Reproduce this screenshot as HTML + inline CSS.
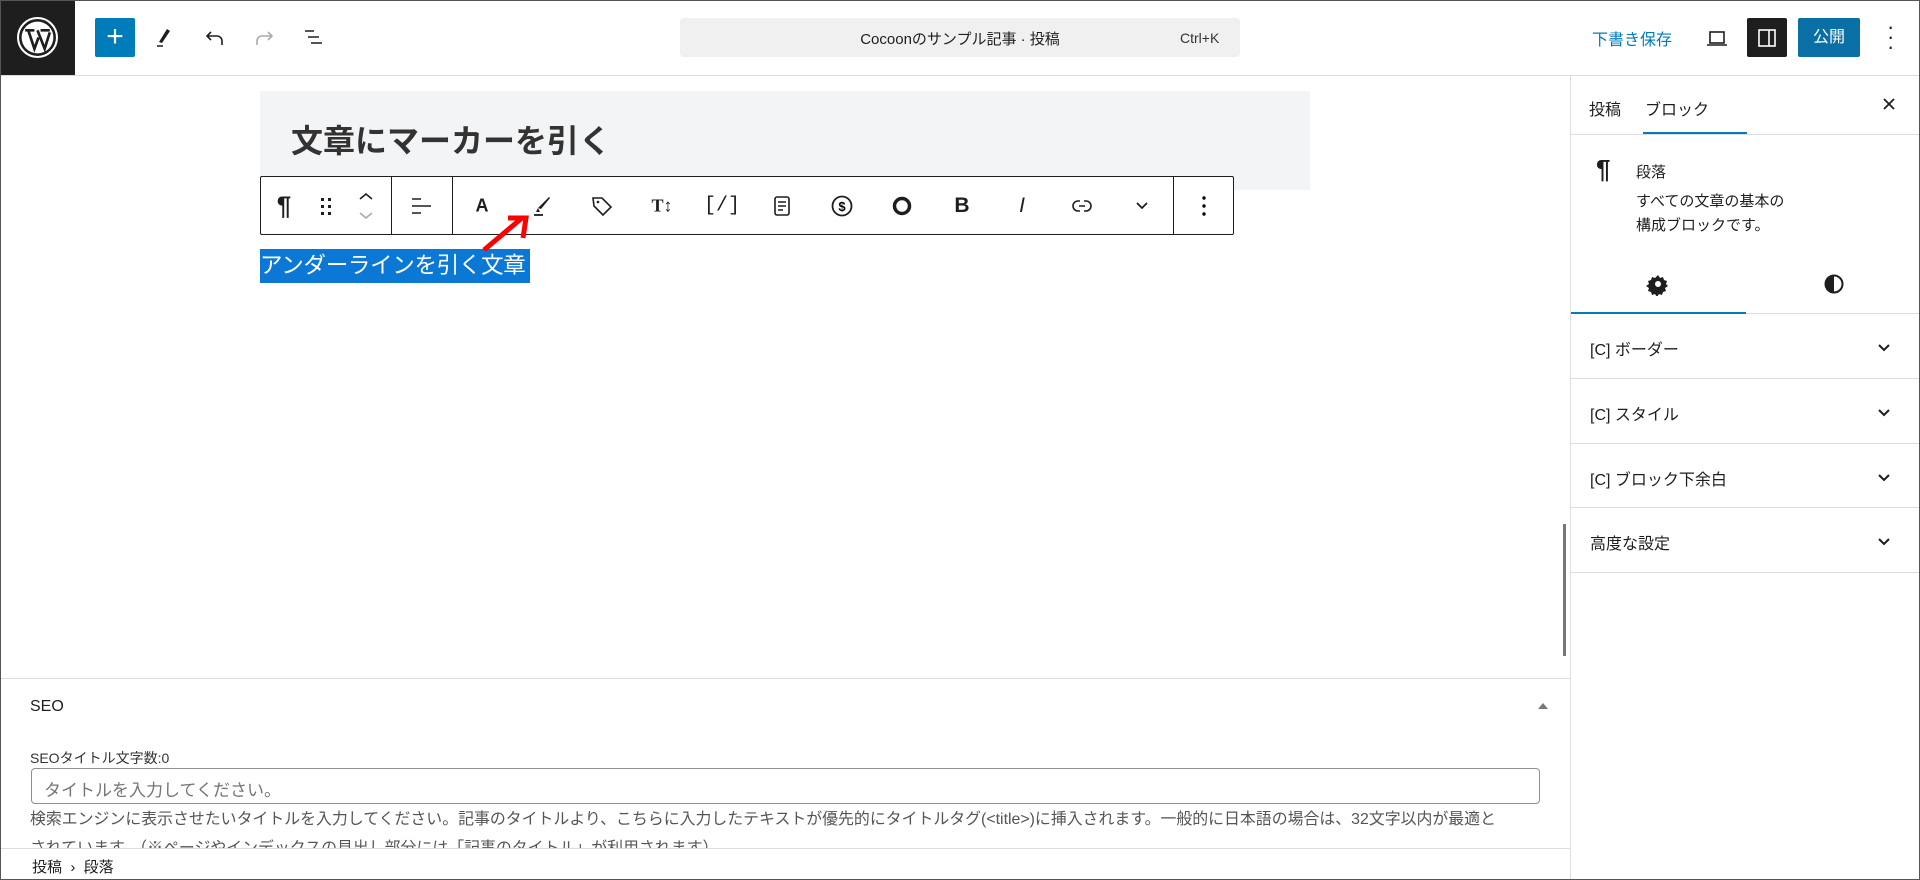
<!DOCTYPE html>
<html><head><meta charset="utf-8"><style>
*{box-sizing:border-box;margin:0;padding:0}
body{width:1920px;height:880px;overflow:hidden;background:#fff;font-family:"Liberation Sans","Noto Sans CJK JP",sans-serif;color:#1e1e1e;position:relative}
.a{position:absolute}
.ic{position:absolute;transform:translate(-50%,-50%)}
.lbl{font-size:16px;color:#1e1e1e}
.hl{left:1571px;width:348px;height:1px;background:#ddd}
</style></head><body>
<div class="a" style="left:0;top:0;width:1920px;height:880px;border:1.5px solid #555;z-index:10;pointer-events:none"></div>
<div class="a" style="left:0;top:0;width:75px;height:75px;background:#1e1e1e"></div>
<svg class="a" style="left:17px;top:17px" width="41" height="41" viewBox="0 0 40 40"><circle cx="20" cy="20" r="19" fill="none" stroke="#fff" stroke-width="2"/><circle cx="20" cy="20" r="15.5" fill="#fff"/><path d="M8 13h9M23 13h9M11 13l6 18 4-11M20 13l7 18 5-16" fill="none" stroke="#1e1e1e" stroke-width="2.6"/></svg>
<div class="a" style="top:75px;left:0;width:1920px;height:1px;background:#ddd"></div>
<div class="a" style="left:95px;top:18px;width:40px;height:39px;background:#007cba;border-radius:2px;color:#fff;font-size:30px;line-height:37px;text-align:center">+</div>
<svg class="a" style="left:152px;top:26px" width="24" height="24" viewBox="0 0 24 24"><path d="M15 3l3 2-8 12-3-1z" fill="#1e1e1e"/><path d="M5 20h6" stroke="#1e1e1e" stroke-width="1.5"/></svg>
<svg class="a" style="left:203px;top:26px" width="24" height="24" viewBox="0 0 24 24"><path d="M8 6l-4 4 4 4M4 10h10a5 5 0 015 5v4" fill="none" stroke="#1e1e1e" stroke-width="1.6"/></svg>
<svg class="a" style="left:252px;top:26px" width="24" height="24" viewBox="0 0 24 24"><path d="M16 6l4 4-4 4M20 10H10a5 5 0 00-5 5v4" fill="none" stroke="#aaa" stroke-width="1.6"/></svg>
<svg class="a" style="left:302px;top:26px" width="24" height="24" viewBox="0 0 24 24"><path d="M3 5h9M6 11h11M9 17h11" stroke="#1e1e1e" stroke-width="1.6"/></svg>
<div class="a" style="left:680px;top:18px;width:560px;height:39px;background:#f0f0f0;border-radius:4px"></div>
<div class="a" style="left:680px;top:28px;width:560px;text-align:center;font-size:15px;color:#1e1e1e">Cocoonのサンプル記事 · 投稿</div>
<div class="a" style="left:1180px;top:30px;font-size:14px;color:#333">Ctrl+K</div>
<div class="a" style="left:1592px;top:26px;font-size:16px;color:#007cba">下書き保存</div>
<svg class="a" style="left:1705px;top:26px" width="24" height="24" viewBox="0 0 24 24"><rect x="5" y="6" width="14" height="11" fill="none" stroke="#1e1e1e" stroke-width="1.6"/><path d="M2 19h20" stroke="#1e1e1e" stroke-width="1.6"/></svg>
<div class="a" style="left:1747px;top:18px;width:40px;height:39px;background:#1e1e1e;border-radius:2px"></div>
<svg class="a" style="left:1755px;top:26px" width="24" height="24" viewBox="0 0 24 24"><rect x="4" y="4" width="16" height="16" fill="none" stroke="#fff" stroke-width="1.6"/><path d="M14 4v16" stroke="#fff" stroke-width="1.6"/></svg>
<div class="a" style="left:1798px;top:18px;width:62px;height:39px;background:#0a6fa5;border-radius:2px;color:#fff;font-size:16px;line-height:39px;text-align:center">公開</div>
<div class="a" style="left:1887px;top:22px;font-size:22px;line-height:10px;color:#1e1e1e;width:6px">·<br>·<br>·</div>
<div class="a" style="left:260px;top:91px;width:1050px;height:99px;background:#f3f4f5"></div>
<div class="a" style="left:291px;top:116px;font-size:32px;font-weight:bold;color:#333">文章にマーカーを引く</div>
<div class="a" style="left:260px;top:176px;width:974px;height:59px;background:#fff;border:1.5px solid #1e1e1e;border-radius:2px"></div>
<div class="a" style="left:391px;top:177px;width:1px;height:57px;background:#1e1e1e"></div>
<div class="a" style="left:452px;top:177px;width:1px;height:57px;background:#1e1e1e"></div>
<div class="a" style="left:1173px;top:177px;width:1px;height:57px;background:#1e1e1e"></div>
<div class="ic" style="left:284px;top:206px;font-size:26px;font-weight:bold">¶</div>
<svg class="ic" style="left:326px;top:206px" width="12" height="20"><g fill="#1e1e1e"><rect x="1" y="2" width="3" height="3"/><rect x="8" y="2" width="3" height="3"/><rect x="1" y="9" width="3" height="3"/><rect x="8" y="9" width="3" height="3"/><rect x="1" y="16" width="3" height="3"/><rect x="8" y="16" width="3" height="3"/></g></svg>
<svg class="ic" style="left:366px;top:206px" width="20" height="30"><path d="M4 8l6-5 6 5" fill="none" stroke="#1e1e1e" stroke-width="1.6"/><path d="M4 22l6 5 6-5" fill="none" stroke="#aaa" stroke-width="1.6"/></svg>
<svg class="ic" style="left:421px;top:206px" width="24" height="24"><path d="M3 5h9M3 12h19M3 19h9" stroke="#1e1e1e" stroke-width="1.6"/></svg>
<div class="ic" style="left:482px;top:206px;font-size:18px;font-weight:bold">A</div>
<svg class="ic" style="left:541px;top:206px" width="24" height="24"><path d="M20 3l1 1-9 11-3-1z" fill="#1e1e1e"/><path d="M9 14l-2 4h4z" fill="#1e1e1e"/><path d="M5 21h9" stroke="#1e1e1e" stroke-width="1.8"/></svg>
<svg class="ic" style="left:602px;top:206px" width="24" height="24"><path d="M3 4h9l9 9-8 8-9-9z" fill="none" stroke="#1e1e1e" stroke-width="1.6"/><circle cx="8" cy="8" r="1.3" fill="#1e1e1e"/></svg>
<div class="ic" style="left:662px;top:206px;font-size:18px;font-weight:bold;font-family:'Liberation Serif',serif">T↕</div>
<div class="ic" style="left:722px;top:206px;font-size:20px;font-family:'Liberation Mono',monospace">[/]</div>
<svg class="ic" style="left:782px;top:206px" width="24" height="24"><rect x="5" y="3" width="14" height="18" rx="2" fill="none" stroke="#1e1e1e" stroke-width="1.6"/><path d="M8 8h8M8 12h8M8 16h5" stroke="#1e1e1e" stroke-width="1.6"/></svg>
<svg class="ic" style="left:842px;top:206px" width="24" height="24"><circle cx="12" cy="12" r="9.5" fill="none" stroke="#1e1e1e" stroke-width="1.8"/><text x="12" y="17" text-anchor="middle" font-size="13" font-weight="bold" font-family="Liberation Sans">$</text></svg>
<svg class="ic" style="left:902px;top:206px" width="24" height="24"><circle cx="12" cy="12" r="7.5" fill="none" stroke="#1e1e1e" stroke-width="3.5"/></svg>
<div class="ic" style="left:962px;top:206px;font-size:21px;font-weight:bold">B</div>
<div class="ic" style="left:1022px;top:206px;font-size:21px;font-style:italic">I</div>
<svg class="ic" style="left:1082px;top:206px" width="24" height="24"><path d="M10 7H8a5 5 0 000 10h2M14 7h2a5 5 0 010 10h-2M9 12h6" fill="none" stroke="#1e1e1e" stroke-width="1.6"/></svg>
<svg class="ic" style="left:1142px;top:206px" width="16" height="12"><path d="M3 3l5 5 5-5" fill="none" stroke="#1e1e1e" stroke-width="1.8"/></svg>
<svg class="ic" style="left:1204px;top:206px" width="6" height="22"><circle cx="3" cy="3" r="1.7"/><circle cx="3" cy="11" r="1.7"/><circle cx="3" cy="19" r="1.7"/></svg>
<div class="a" style="left:260px;top:249px;width:270px;height:34px;background:#0a78d4;color:#fff;font-size:22.5px;line-height:34px;white-space:nowrap;letter-spacing:-0.3px;overflow:hidden">アンダーラインを引く文章</div>
<svg class="a" style="left:478px;top:206px" width="60" height="50"><path d="M6 44L44 12" stroke="#f00" stroke-width="5"/><path d="M30 12h18l-3 20" fill="none" stroke="#f00" stroke-width="5"/></svg>
<div class="a" style="left:1563px;top:524px;width:3px;height:132px;background:#777"></div>
<div class="a" style="left:0;top:678px;width:1570px;height:1px;background:#ddd"></div>
<div class="a" style="left:30px;top:698px;font-size:16px">SEO</div>
<svg class="a" style="left:1537px;top:701px" width="12" height="10"><path d="M1 8L6 2l5 6z" fill="#777"/></svg>
<div class="a" style="left:30px;top:748px;font-size:14px;color:#333">SEOタイトル文字数:0</div>
<div class="a" style="left:31px;top:768px;width:1509px;height:36px;border:1px solid #8c8f94;border-radius:4px"></div>
<div class="a" style="left:44px;top:776px;font-size:17px;color:#757575">タイトルを入力してください。</div>
<div class="a" style="left:30px;top:805px;width:1530px;font-size:15.9px;color:#555;line-height:29px;white-space:nowrap">検索エンジンに表示させたいタイトルを入力してください。記事のタイトルより、こちらに入力したテキストが優先的にタイトルタグ(&lt;title&gt;)に挿入されます。一般的に日本語の場合は、32文字以内が最適と<br>されています。（※ページやインデックスの見出し部分には「記事のタイトル」が利用されます）</div>
<div class="a" style="left:0;top:848px;width:1570px;height:32px;background:#fff;border-top:1px solid #ddd"></div>
<div class="a" style="left:32px;top:856px;font-size:15px">投稿 &nbsp;›&nbsp; 段落</div>
<div class="a" style="left:1570px;top:76px;width:1px;height:804px;background:#ddd"></div>
<div class="a" style="left:1571px;top:76px;width:349px;height:804px;background:#fff"></div>
<div class="a" style="left:1589px;top:96px;font-size:16px">投稿</div>
<div class="a" style="left:1645px;top:96px;font-size:16px">ブロック</div>
<div class="a" style="left:1643px;top:132px;width:104px;height:3px;background:#007cba"></div>
<svg class="a" style="left:1882px;top:97px" width="14" height="14"><path d="M2 2l10 10M12 2L2 12" stroke="#1e1e1e" stroke-width="1.8"/></svg>
<div class="a hl" style="top:134px"></div>
<div class="a" style="left:1596px;top:154px;font-size:26px;font-weight:bold">¶</div>
<div class="a" style="left:1636px;top:161px;font-size:15px">段落</div>
<div class="a" style="left:1636px;top:190px;font-size:15px;line-height:24px">すべての文章の基本の<br>構成ブロックです。</div>
<svg class="a" style="left:1646px;top:272px" width="24" height="24" viewBox="0 0 24 24"><path d="M12 3l2 3 3-1 1 3 3 1-1 3 2 2-3 2 1 3-3 1-1 3-3-1-2 3-2-3-3 1-1-3-3-1 1-3-3-2 3-2-1-3 3-1 1-3 3 1z" fill="#1e1e1e"/><circle cx="12" cy="12" r="3" fill="#fff"/></svg>
<svg class="a" style="left:1822px;top:272px" width="24" height="24" viewBox="0 0 24 24"><circle cx="12" cy="12" r="8.5" fill="none" stroke="#1e1e1e" stroke-width="2"/><path d="M12 3.5a8.5 8.5 0 000 17z" fill="#1e1e1e"/></svg>
<div class="a hl" style="top:313px"></div>
<div class="a" style="left:1571px;top:312px;width:175px;height:2px;background:#007cba"></div>
<div class="a lbl" style="left:1590px;top:336px">[C] ボーダー</div>
<div class="a hl" style="top:378px"></div>
<div class="a lbl" style="left:1590px;top:401px">[C] スタイル</div>
<div class="a hl" style="top:443px"></div>
<div class="a lbl" style="left:1590px;top:466px">[C] ブロック下余白</div>
<div class="a hl" style="top:507px"></div>
<div class="a lbl" style="left:1590px;top:530px">高度な設定</div>
<div class="a hl" style="top:572px"></div>
<svg class="a" style="left:1876px;top:342px" width="16" height="12"><path d="M3 3l5 5 5-5" fill="none" stroke="#1e1e1e" stroke-width="2"/></svg>
<svg class="a" style="left:1876px;top:407px" width="16" height="12"><path d="M3 3l5 5 5-5" fill="none" stroke="#1e1e1e" stroke-width="2"/></svg>
<svg class="a" style="left:1876px;top:472px" width="16" height="12"><path d="M3 3l5 5 5-5" fill="none" stroke="#1e1e1e" stroke-width="2"/></svg>
<svg class="a" style="left:1876px;top:536px" width="16" height="12"><path d="M3 3l5 5 5-5" fill="none" stroke="#1e1e1e" stroke-width="2"/></svg>
</body></html>
